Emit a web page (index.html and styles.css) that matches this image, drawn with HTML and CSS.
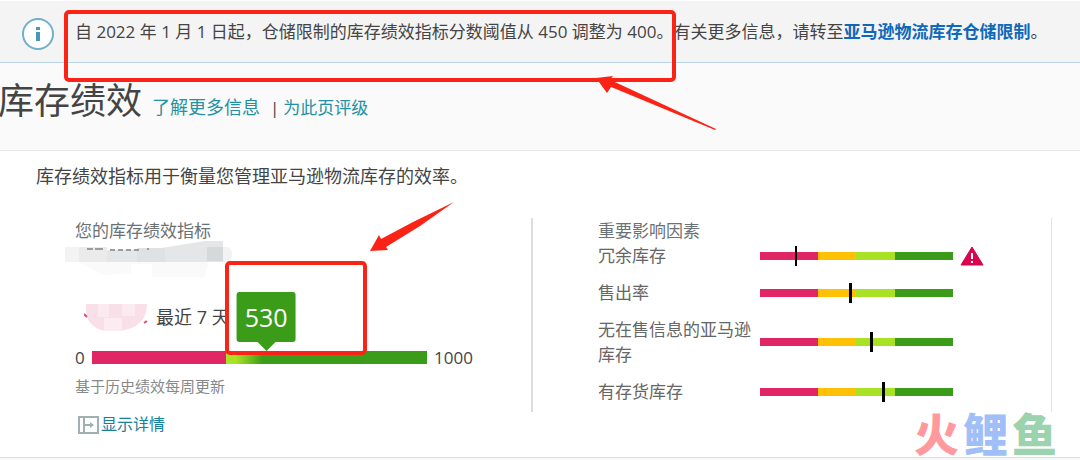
FILE: index.html
```html
<!DOCTYPE html>
<html lang="zh-CN">
<head>
    <meta charset="UTF-8">
    <meta name="viewport" content="width=device-width, initial-scale=1.0">
    <title>库存绩效</title>
    <link rel="stylesheet" href="styles.css">
</head>
<body>
    <div class="alert">
        <svg class="alert-icon" width="34" height="34" viewBox="0 0 34 34">
            <circle cx="17" cy="17" r="15" fill="#fff" stroke="#6fb1c8" stroke-width="2"/>
            <rect x="15" y="10" width="4" height="3" fill="#4697b8"/>
            <rect x="15" y="15" width="4" height="9" fill="#4697b8"/>
        </svg>
        <p>自 2022 年 1 月 1 日起，仓储限制的库存绩效指标分数阈值从 450 调整为 400。有关更多信息，请转至<a href="#">亚马逊物流库存仓储限制</a>。</p>
    </div>

    <header class="page-header">
        <h1>库存绩效</h1>
        <a class="learn-more" href="#">了解更多信息</a>
        <span class="separator">|</span>
        <a class="rate-page" href="#">为此页评级</a>
    </header>

    <main>
        <p class="intro">库存绩效指标用于衡量您管理亚马逊物流库存的效率。</p>

        <div class="columns">
            <section class="score">
                <h2>您的库存绩效指标</h2>
                <svg class="masked-date" width="172" height="34" viewBox="0 0 172 34">
                    <path d="M0 4h14v15H0z" fill="#f3f3f3"/>
                    <path d="M14 4h28v15H14z" fill="#ebebeb"/>
                    <path d="M42 7l48-1 50-8h18v21H42z" fill="#e4e6e7"/>
                    <path d="M72 5h28v14H72z" fill="#dfe1e2"/>
                    <path d="M142 4h16v14h-16z" fill="#d6d9da"/>
                    <path d="M158 4h5q5 3 4 9l-2 6h-7z" fill="#f3f3f3"/>
                    <path d="M14 19h130l-5 15H87V21H66v9l-28 2z" fill="#fafafa"/>
                    <path d="M22 6h6M30 6h8M45 7h5M53 7h5M61 7h5M69 7h5M82 6h2" stroke="#9a9d9f" stroke-width="2"/>
                </svg>
                <div class="period">
                    <svg width="64" height="27" viewBox="0 0 64 27">
                        <path d="M2 0h61c0 8-2 15-10 21-8 6-26 8-36 5C6 22 1 15 2 0z" fill="#f9dfe8"/>
                        <path d="M14 0h11v13H14zM38 0h13v12H38z" fill="#fbeaf0"/>
                        <path d="M20 14h18v13H20z" fill="#fcecf2"/>
                        <path d="M0 10l3 3M60 19l3-2" stroke="#d84f80" stroke-width="2"/>
                    </svg>
                    <span>最近 7 天</span>
                </div>
                <div class="scale">
                    <span>0</span>
                    <div class="scale-bar">
                        <div class="bubble" style="left: 52%">530</div>
                    </div>
                    <span>1000</span>
                </div>
                <p class="note">基于历史绩效每周更新</p>
                <a class="details" href="#">
                    <svg width="21" height="18" viewBox="0 0 21 18" fill="none" stroke="#9fb0b0" stroke-width="2">
                        <rect x="1" y="1" width="19" height="16"/>
                        <path d="M6 1v16M6 9h8"/>
                        <path d="M12 6l4 3-4 3z" fill="#9fb0b0" stroke="none"/>
                    </svg>
                    显示详情
                </a>
            </section>

            <section class="factors">
                <h2>重要影响因素</h2>
                <div class="factor">
                    <span class="factor-name">冗余库存</span>
                    <div class="factor-bar"><i class="thin" style="left: 18%"></i></div>
                    <svg class="warning" width="24" height="20" viewBox="0 0 24 20">
                        <path d="M12 1L23 19H1z" fill="#d9044f" stroke="#d9044f" stroke-linejoin="round"/>
                        <path d="M12 7v6M12 15v2" stroke="#fff" stroke-width="2"/>
                    </svg>
                </div>
                <div class="factor">
                    <span class="factor-name">售出率</span>
                    <div class="factor-bar"><i style="left: 46%"></i></div>
                </div>
                <div class="factor">
                    <span class="factor-name">无在售信息的亚马逊库存</span>
                    <div class="factor-bar"><i style="left: 57%"></i></div>
                </div>
                <div class="factor">
                    <span class="factor-name">有存货库存</span>
                    <div class="factor-bar"><i style="left: 63%"></i></div>
                </div>
            </section>
        </div>
    </main>

    <!-- red callouts on top of the page -->
    <div class="callout callout-alert"></div>
    <div class="callout callout-score"></div>
    <svg class="arrow arrow-alert" width="122" height="56" viewBox="0 0 122 56">
        <path d="M1 2l17-2-3 4 7 3 99 46-1 1L21 13l-5-2-4 6z" fill="#fb2315"/>
    </svg>
    <svg class="arrow arrow-score" width="84" height="50" viewBox="0 0 84 50">
        <path d="M0 49l9-16 2 4 32-17L84 0 50 24 16 45l2 3z" fill="#fb2315"/>
    </svg>

    <div class="watermark"><span class="red">火</span><span class="blue">鲤</span><span class="green">鱼</span></div>
</body>
</html>
```
FILE: styles.css
```css
* {
    box-sizing: border-box;
}

body {
    margin: 0;
    position: relative;
    background: #f9f9f9;
    color: #444;
    font-family: "Open Sans", "Noto Sans CJK SC", sans-serif;
    font-size: 17px;
    line-height: 25px;
}

h1, h2, p {
    margin: 0;
    font-weight: normal;
}

a {
    color: #2391a3;
    text-decoration: none;
}

a:hover {
    text-decoration: underline;
}

.alert {
    display: flex;
    align-items: flex-start;
    gap: 20px;
    padding: 16px 20px 11px 21px;
    border-top: 1px solid #fff;
    border-bottom: 1px solid #b9d4e6;
    background: #f4f4f4;
}

.alert-icon {
    flex: none;
}

.alert p {
    padding-top: 2px;
}

.alert a {
    color: #0f68b8;
    font-weight: bold;
}

.page-header {
    display: flex;
    align-items: baseline;
    height: 88px;
    padding-top: 13px;
    border-bottom: 1px solid #e6e6e6;
    background: #fafafa;
}

.page-header h1 {
    margin-left: -2px;
    font-size: 36px;
    line-height: 50px;
}

.learn-more {
    margin-left: 10px;
    font-size: 18px;
}

.separator {
    margin: 0 4px 0 10px;
}

main {
    padding: 13px 28px 20px 36px;
    border-bottom: 1px solid #ddd;
    background: #fff;
}

.intro {
    font-size: 18px;
}

.columns {
    display: grid;
    grid-template-columns: 7fr 8fr;
    margin: 29px 0 0 39px;
}

.columns h2 {
    color: #6b7275;
    font-size: 17px;
}

.score {
    display: flex;
    flex-direction: column;
    align-items: flex-start;
}

.masked-date {
    margin-left: -10px;
    overflow: visible;
}

.period {
    display: flex;
    align-items: center;
    gap: 8px;
    margin: 27px 0 0 9px;
    font-size: 18px;
}

.scale {
    display: flex;
    align-items: center;
    gap: 7px;
    width: 398px;
    margin-top: 14px;
}

.scale-bar {
    position: relative;
    flex: 1;
    height: 13px;
    background: linear-gradient(to right, #e12665 40%, #a9e224 40%, #a9e224 43%, #3a9c18 51%);
}

.bubble {
    position: absolute;
    bottom: 22px;
    padding: 8px;
    border-radius: 3px;
    background: #3a9c18;
    color: #fff;
    font-size: 25px;
    line-height: 34px;
    transform: translateX(-50%);
}

.bubble::after {
    content: "";
    position: absolute;
    top: 100%;
    left: 50%;
    margin-left: -9px;
    border: 9px solid transparent;
    border-top-color: #3a9c18;
    border-bottom: 0;
}

.note {
    margin-top: 4px;
    color: #888;
    font-size: 15px;
}

.details {
    display: flex;
    align-items: center;
    gap: 2px;
    margin: 13px 0 0 3px;
    color: #15819a;
    font-size: 16px;
}

.factors {
    align-self: start;
    height: 194px;
    padding-left: 65px;
    border-left: 2px solid #ddd;
    border-right: 1px solid #e2e2e2;
}

.factor {
    display: flex;
    align-items: center;
    margin-bottom: 12px;
}

.factor-name {
    width: 162px;
    padding-right: 8px;
    color: #666;
}

.factor-bar {
    position: relative;
    width: 193px;
    height: 8px;
    background: linear-gradient(to right, #e12665 30%, #fec106 30%, #fec106 50%, #a9e224 50%, #a9e224 70%, #3a9c18 70%);
}

.factor-bar i {
    position: absolute;
    top: -6px;
    width: 3px;
    height: 20px;
    background: #000;
}

.factor-bar .thin {
    width: 2px;
}

.warning {
    margin-left: 7px;
}

.callout {
    position: absolute;
    border: 4px solid #fb2315;
    border-radius: 5px;
}

.callout-alert {
    top: 10px;
    left: 64px;
    width: 612px;
    height: 72px;
}

.callout-score {
    top: 261px;
    left: 225px;
    width: 142px;
    height: 94px;
}

.arrow {
    position: absolute;
}

.arrow-alert {
    top: 76px;
    left: 595px;
}

.arrow-score {
    top: 202px;
    left: 370px;
}

.watermark {
    position: absolute;
    right: 23px;
    bottom: 0;
    display: flex;
    gap: 4px;
    font-family: "Noto Sans CJK SC", sans-serif;
    font-size: 45px;
    font-weight: 900;
    line-height: 50px;
}

.watermark .red {
    color: #ff999d;
}

.watermark .blue {
    color: #a0bff9;
}

.watermark .green {
    color: #9bd3ae;
}
```
